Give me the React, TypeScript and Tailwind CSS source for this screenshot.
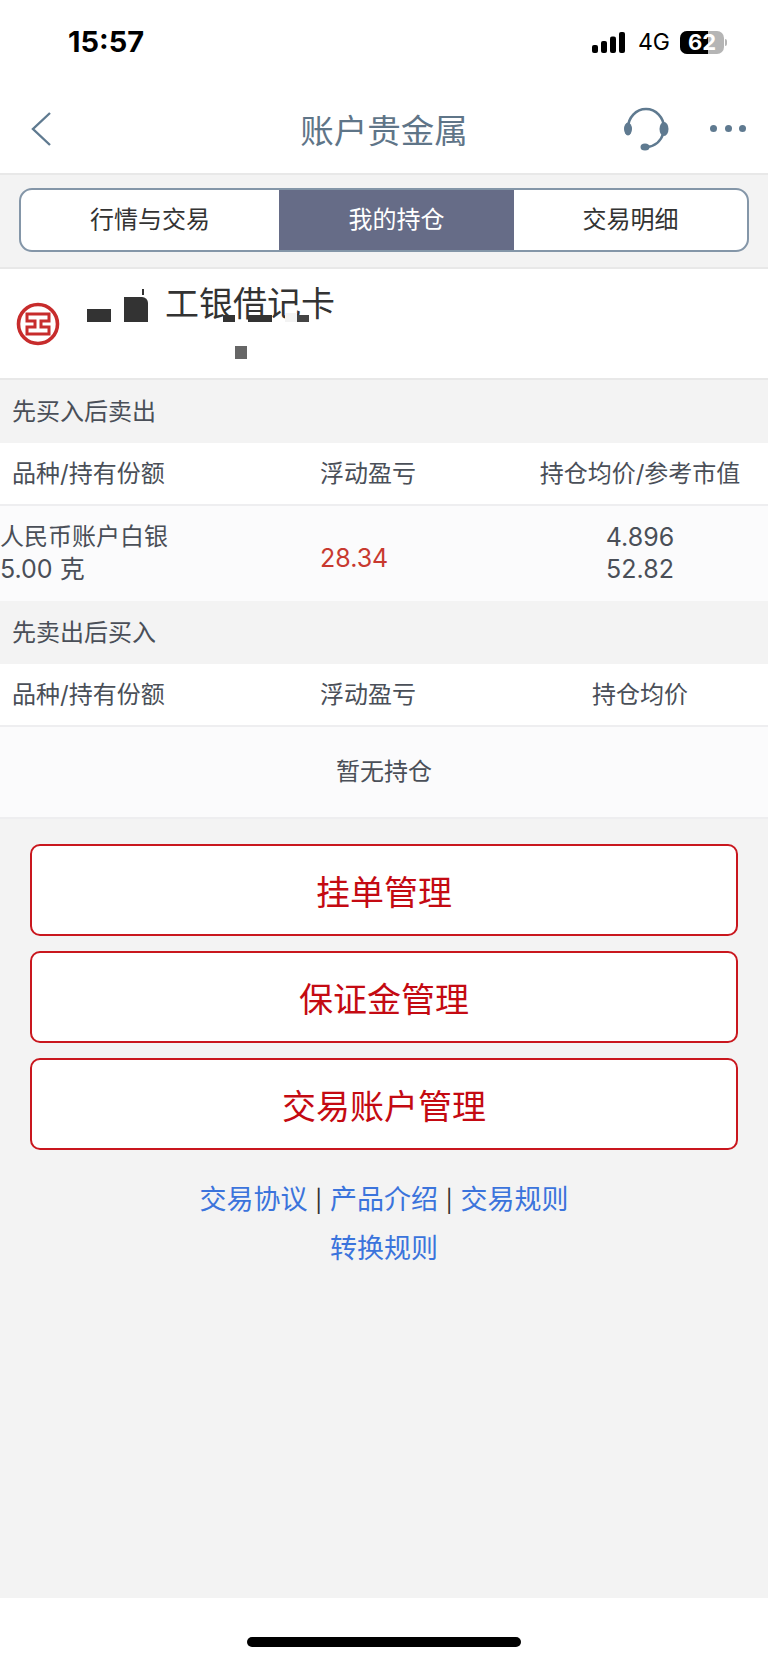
const StatusBar = () => (
  <div className="flex h-[84px] items-center justify-between pl-[68px] pr-[41px]">
    <span className="text-[29px] font-bold text-black">15:57</span>
    <div className="flex items-center">
      <svg width="34" height="21" viewBox="0 0 34 21" className="mr-[12px]" fill="#000">
        <rect x="0" y="13" width="6" height="8" rx="2" />
        <rect x="9" y="9" width="6" height="12" rx="2" />
        <rect x="18" y="4.5" width="6" height="16.5" rx="2" />
        <rect x="27" y="0" width="6" height="21" rx="2" />
      </svg>
      <span className="mr-[10px] text-[23px] leading-none text-black">4G</span>
      <div className="relative flex h-[23px] w-[44px] items-center justify-center overflow-hidden rounded-[7px] bg-[#b5b5b5]">
        <div className="absolute inset-y-0 left-0 w-[28px] bg-black" />
        <span className="relative text-[22px] font-bold leading-none text-white">62</span>
      </div>
      <div className="ml-[1px] h-[7px] w-[2px] rounded-r-full bg-[#b5b5b5]" />
    </div>
  </div>
);

const NavBar = () => (
  <div className="flex h-[91px] items-center justify-between border-b-2 border-[#e8e8e8] pl-[30px] pr-[22px]">
    <svg width="22" height="36" viewBox="0 0 22 36" fill="none" stroke="#5f7a90" strokeWidth="2.4">
      <path d="M20 2 L3 18 L20 34" />
    </svg>
    <span className="absolute left-0 right-0 mt-[5px] text-center text-[33.5px] text-[#5f7588]">账户贵金属</span>
    <div className="flex items-center">
      <svg width="46" height="44" viewBox="0 0 46 44" fill="none">
        <path d="M5 21 A18 19 0 0 1 41 21" stroke="#5f7a90" strokeWidth="2.6" />
        <path d="M40 27 C38 34 32 39 24 40" stroke="#5f7a90" strokeWidth="2.6" />
        <ellipse cx="5" cy="22" rx="4" ry="6.5" fill="#5f7a90" />
        <ellipse cx="41" cy="22" rx="4.5" ry="7" fill="#5f7a90" />
        <ellipse cx="22" cy="40" rx="4.5" ry="3.5" fill="#5f7a90" />
      </svg>
      <div className="ml-[41px] flex gap-[7.5px]">
        <div className="h-[7px] w-[7px] rounded-full bg-[#5f7a90]" />
        <div className="h-[7px] w-[7px] rounded-full bg-[#5f7a90]" />
        <div className="h-[7px] w-[7px] rounded-full bg-[#5f7a90]" />
      </div>
    </div>
  </div>
);

const tabs = ["行情与交易", "我的持仓", "交易明细"];

const Tabs = () => (
  <div className="px-[19px] pb-[15px] pt-[13px]">
    <div className="grid h-[64px] grid-cols-[258px_235px_1fr] overflow-hidden rounded-[13px] border-2 border-[#8496a8] bg-white">
      {tabs.map((t, i) => (
        <div
          key={t}
          className={
            i === 1
              ? "flex items-center justify-center bg-[#666c87] text-[24px] text-white"
              : "flex items-center justify-center text-[24px] text-[#333]"
          }
        >
          {t}
        </div>
      ))}
    </div>
  </div>
);

const CardRow = () => (
  <div className="relative flex h-[113px] border-y-2 border-[#e8e8e8] bg-white">
    <svg width="44" height="44" viewBox="0 0 44 44" fill="none" stroke="#c72c2c" className="ml-[16px] mt-[33px]">
      <circle cx="22" cy="22" r="19.5" strokeWidth="3.6" />
      <path d="M11 12 H33 V19 H25 V25 H33 V32 H11 V25 H19 V19 H11 Z" strokeWidth="3" />
    </svg>
    <span className="ml-[105px] mt-[13px] text-[34px] leading-[44px] text-[#333]">工银借记卡</span>
    <div className="absolute left-[87px] top-[40px] h-[13px] w-[24px] bg-[#333]" />
    <div className="absolute left-[124px] top-[28px] h-[25px] w-[24px] rounded-tr-[6px] bg-[#333]" />
    <div className="absolute left-[142px] top-[20px] h-[6px] w-[2px] bg-[#333]" />
    <div className="absolute left-[223px] top-[46px] h-[7px] w-[12px] bg-[#333]" />
    <div className="absolute left-[248px] top-[46px] h-[7px] w-[24px] bg-[#333]" />
    <div className="absolute left-[285px] top-[44px] h-[9px] w-[12px] bg-[#f3f3f3]" />
    <div className="absolute left-[297px] top-[46px] h-[7px] w-[12px] bg-[#444]" />
    <div className="absolute left-[235px] top-[77px] h-[13px] w-[12px] bg-[#666]" />
  </div>
);

const SectionTitle = ({ title, h }: { title: string; h: string }) => (
  <div className={`flex items-center pl-[12px] text-[24px] text-[#4a4f58] ${h}`}>{title}</div>
);

const HeaderRow = ({ last }: { last: string }) => (
  <div className="grid h-[63px] grid-cols-[320px_192px_256px] items-center border-b-2 border-[#eeeef0] bg-white text-[24px] text-[#4a4f58]">
    <span className="pl-[12px]">品种/持有份额</span>
    <span>浮动盈亏</span>
    <span className="text-center">{last}</span>
  </div>
);

const ManageButton = ({ label }: { label: string }) => (
  <button className="flex h-[92px] w-full items-center justify-center rounded-[10px] border-2 border-[#c9171e] bg-white pt-[5px] text-[34px] text-[#c40a12]">
    {label}
  </button>
);

export default function App() {
  return (
    <div
      className="relative flex h-[1662px] w-[768px] flex-col overflow-hidden bg-[#f3f3f3]"
      style={{ fontFamily: '"Inter", "Noto Sans CJK SC", sans-serif' }}
    >
      <div className="bg-white">
        <StatusBar />
        <NavBar />
      </div>
      <Tabs />
      <CardRow />
      <SectionTitle title="先买入后卖出" h="h-[63px]" />
      <HeaderRow last="持仓均价/参考市值" />
      <div className="grid h-[95px] grid-cols-[320px_192px_256px] items-center bg-[#fbfbfc] text-[24px] leading-[32px] text-[#4a4f58]">
        <div className="mb-[2px]">
          <div>人民币账户白银</div>
          <div className="text-[25px]">5.00 克</div>
        </div>
        <span className="mt-[8px] text-[25px] text-[#c8392f]">28.34</span>
        <div className="mb-[2px] text-center text-[25px]">
          <div>4.896</div>
          <div>52.82</div>
        </div>
      </div>
      <SectionTitle title="先卖出后买入" h="h-[63px]" />
      <HeaderRow last="持仓均价" />
      <div className="flex h-[92px] items-center justify-center border-b-2 border-[#eeeef0] bg-[#fbfbfc] text-[24px] text-[#4a4f58]">
        暂无持仓
      </div>
      <div className="flex flex-col gap-[15px] px-[30px] pt-[25px]">
        <ManageButton label="挂单管理" />
        <ManageButton label="保证金管理" />
        <ManageButton label="交易账户管理" />
      </div>
      <div className="mt-[31px] flex flex-col items-center gap-[10px] text-[27px] leading-[37px] text-[#3b74dc]">
        <div>
          交易协议 <span className="text-[22px] text-[#333]">|</span> 产品介绍 <span className="text-[22px] text-[#333]">|</span> 交易规则
        </div>
        <div>转换规则</div>
      </div>
      <div className="mt-auto flex h-[64px] items-end justify-center bg-white pb-[15px]">
        <div className="h-[10px] w-[274px] rounded-full bg-black" />
      </div>
    </div>
  );
}
